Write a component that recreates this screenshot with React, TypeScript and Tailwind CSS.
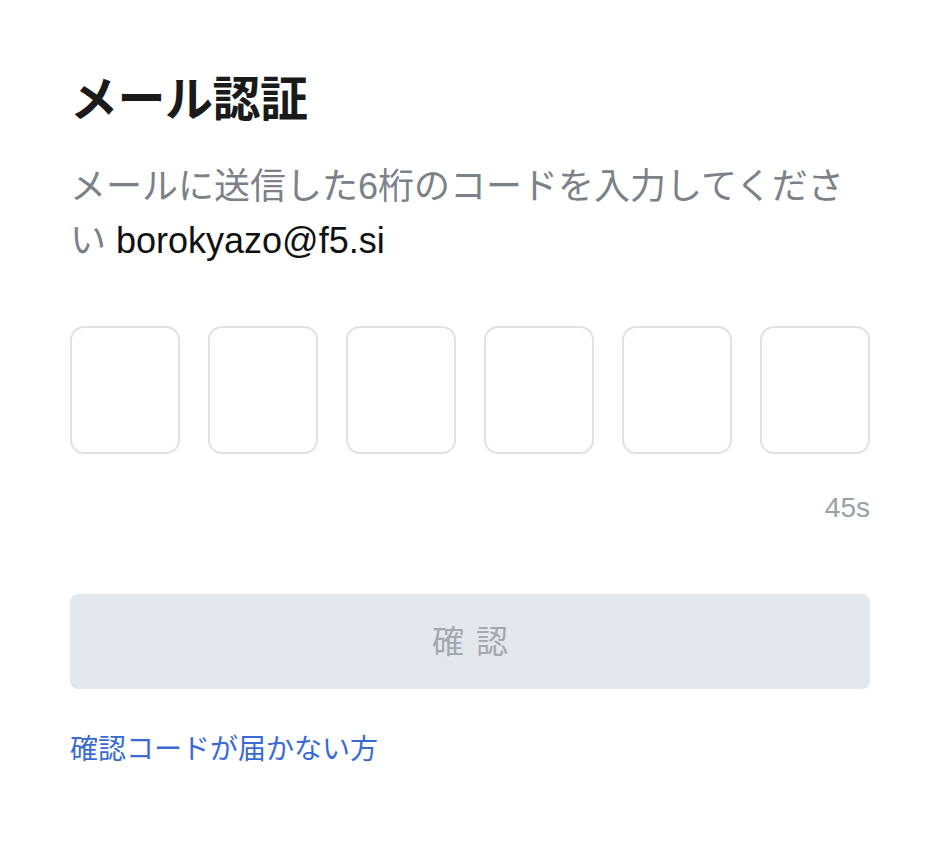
export default function App() {
  const font = { fontFamily: '"Liberation Sans", "Noto Sans CJK JP", sans-serif' };
  return (
    <div className="min-h-[842px] w-full bg-white" style={font}>
      <div className="ml-[70px] w-[800px] pt-[76px] flex flex-col">
        <h1 className="text-[48px] leading-[48px] font-bold text-[#1a1a1a] tracking-[-0.5px]">メール認証</h1>
        <p className="mt-[36px] text-[36px] leading-[54px] text-[#7c8189]">
          メールに送信した6桁のコードを入力してください <span className="text-[#111111]">borokyazo@f5.si</span>
        </p>
        <div className="mt-[58px] flex justify-between">
          {[0, 1, 2, 3, 4, 5].map((i) => (
            <div key={i} className="w-[110px] h-[128px] rounded-[14px] border-2 border-[#e2e2e2] bg-white" />
          ))}
        </div>
        <div className="mt-[40px] text-right text-[28px] leading-[28px] text-[#9aa0a8]">45s</div>
        <button className="mt-[72px] h-[95px] w-full rounded-[8px] bg-[#e4e7eb] text-[32px] text-[#a3a8b0] tracking-[12px] pl-[12px]">
          確認
        </button>
        <a className="mt-[47px] text-[28px] leading-[28px] text-[#3a6bd3]">確認コードが届かない方</a>
      </div>
    </div>
  );
}
